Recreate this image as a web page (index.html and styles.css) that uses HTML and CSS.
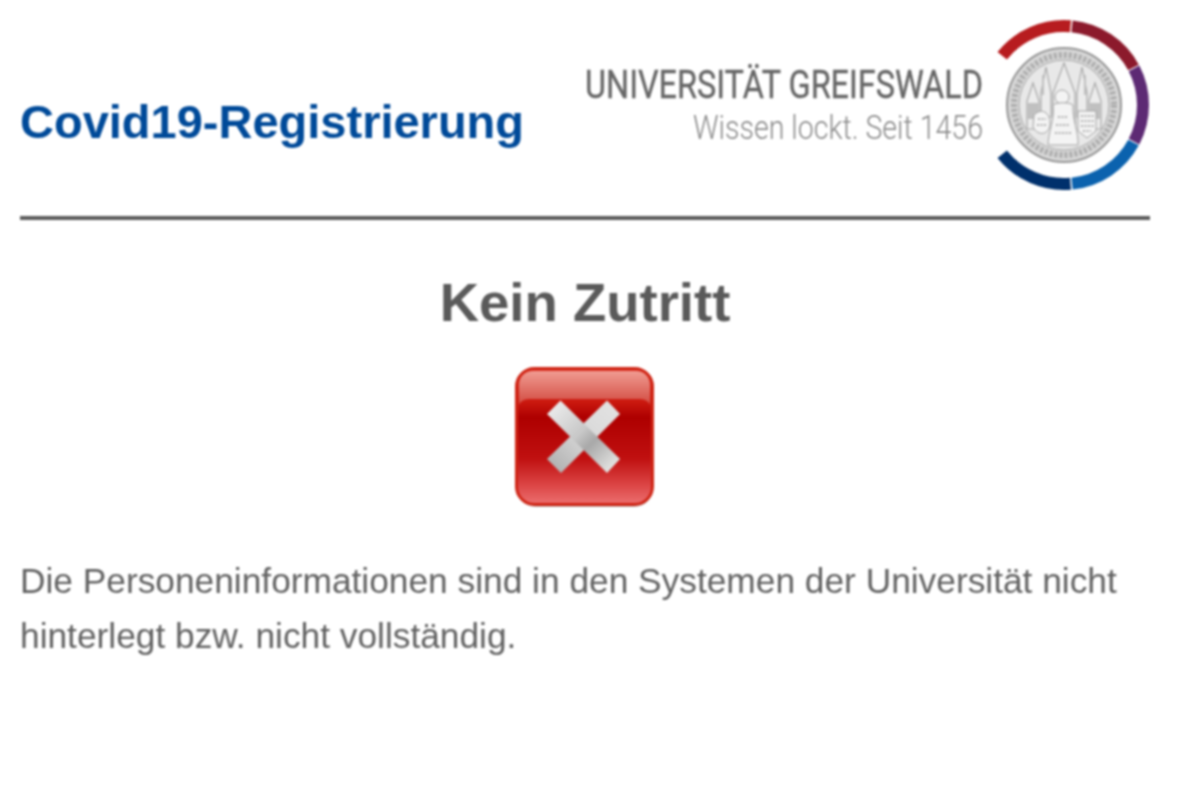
FILE: index.html
```html
<!DOCTYPE html>
<html lang="de">
<head>
<meta charset="utf-8">
<title>Covid19-Registrierung</title>
<link rel="stylesheet" href="styles.css">
</head>
<body>
<main class="page">
  <header class="header">
    <div class="title">Covid19-Registrierung</div>
    <svg class="logo" viewBox="0 0 570 180" width="570" height="180" role="img" aria-label="Universität Greifswald">
      <text class="logo-name" x="5" y="80" textLength="398" lengthAdjust="spacingAndGlyphs">UNIVERSITÄT GREIFSWALD</text>
      <text class="logo-claim" x="113" y="121" textLength="290" lengthAdjust="spacingAndGlyphs">Wissen lockt. Seit 1456</text>
      <g transform="translate(484 87)">
        <g class="ring">
          <path class="r1" d="M-61.8 -49.3A79 79 0 0 1 6.5 -78.7"/>
          <path class="r2" d="M8 -78.6A79 79 0 0 1 69.5 -37.5"/>
          <path class="r3" d="M70 -36.6A79 79 0 0 1 70 36.6"/>
          <path class="r4" d="M69.5 37.5A79 79 0 0 1 8 78.6"/>
          <path class="r5" d="M6.5 78.7A79 79 0 0 1 -61.8 49.3"/>
        </g>
        <g class="seal">
          <circle class="seal-base" r="57"/>
          <circle class="seal-text" r="50"/>
          <circle class="seal-line" r="45"/>
          <g class="seal-church">
            <path d="M0 -42L11 -12V22H-11V-12Z"/>
            <path d="M-31 -22L-25 -4V24H-37V-4Z"/>
            <path d="M31 -22L37 -4V24H25V-4Z"/>
            <path d="M-18 -38L-13 -12V12H-23V-12Z"/>
            <path d="M18 -38L23 -12V12H13V-12Z"/>
          </g>
          <g class="seal-shade">
            <path d="M-36 -2H-26V14H-36ZM26 -2H36V14H26ZM-22 -30H-20V-10H-22ZM20 -30H22V-10H20Z"/>
          </g>
          <g class="seal-figure">
            <circle cx="-2" cy="-8" r="7"/>
            <path d="M-11 0C-9 14 -16 28 -16 40H14C15 28 8 14 9 0C5 -3 -7 -3 -11 0Z"/>
            <path d="M-30 10C-22 2 -14 8 -14 18C-14 30 -26 32 -31 22Z"/>
            <path d="M14 6H32V26L23 33L14 26Z"/>
          </g>
          <g class="seal-dots">
            <path d="M17 11H30M17 16H30M17 21H30M19 26H27M-26 14H-18M-27 20H-18M-6 12H4M-8 20H6M-9 28H8"/>
          </g>
        </g>
      </g>
    </svg>
  </header>

  <h1 class="heading">Kein Zutritt</h1>

  <div class="status">
    <svg class="status-icon" viewBox="0 0 140 142" width="140" height="142" role="img" aria-label="Kein Zutritt">
      <defs>
        <linearGradient id="box" x1="0" y1="0" x2="0" y2="1">
          <stop offset="0" stop-color="#e23c30"/>
          <stop offset="0.24" stop-color="#cc1a10"/>
          <stop offset="0.36" stop-color="#ae0000"/>
          <stop offset="0.66" stop-color="#c01010"/>
          <stop offset="0.86" stop-color="#dc4646"/>
          <stop offset="1" stop-color="#ec7070"/>
        </linearGradient>
        <linearGradient id="gloss" x1="0" y1="0" x2="0" y2="1">
          <stop offset="0" stop-color="#f09c92"/>
          <stop offset="1" stop-color="#d24a40"/>
        </linearGradient>
        <linearGradient id="barA" x1="0" y1="0" x2="1" y2="1">
          <stop offset="0" stop-color="#f2f2f2"/>
          <stop offset="0.45" stop-color="#c8c8c8"/>
          <stop offset="0.6" stop-color="#a8a8a8"/>
          <stop offset="1" stop-color="#f4f4f2"/>
        </linearGradient>
        <linearGradient id="barB" x1="1" y1="0" x2="0" y2="1">
          <stop offset="0" stop-color="#e4e4e4"/>
          <stop offset="0.5" stop-color="#d8d8d8"/>
          <stop offset="1" stop-color="#aaaaaa"/>
        </linearGradient>
      </defs>
      <rect class="box-shadow" x="2" y="4" width="136" height="136" rx="19"/>
      <rect class="box-body" x="1.5" y="1.5" width="136" height="136" rx="18"/>
      <path class="box-gloss" d="M4 38V18C4 10 10 4 18 4H121C129 4 135 10 135 18V38C133 33 129 32 122 32H17C10 32 6 33 4 38Z"/>
      <path class="bar-b" d="M32 92L92 33.5L105 47L46 106Z"/>
      <path class="bar-a" d="M32 47L45.5 33.5L105 92L92 106Z"/>
    </svg>
  </div>

  <p class="message">Die Personeninformationen sind in den Systemen der Universität nicht hinterlegt bzw. nicht vollständig.</p>
</main>
</body>
</html>
```

FILE: styles.css
```css
html, body {
  margin: 0;
  padding: 0;
  background: #fff;
}

body {
  font-family: "Liberation Sans", Arial, sans-serif;
  color: #666;
}

.page {
  width: 1130px;
  margin-left: 20px;
  filter: blur(0.8px);
}

.header {
  display: flex;
  justify-content: space-between;
  align-items: center;
  padding: 18px 0 18px;
  border-bottom: 4px solid #5c5c5c;
}

.title {
  margin-top: 26px;
  font-size: 47px;
  font-weight: 700;
  color: #004a99;
}

.logo {
  display: block;
}

.logo-name {
  font-family: Roboto, sans-serif;
  font-size: 38px;
  fill: #666;
  stroke: #666;
  stroke-width: 0.35;
}

.logo-claim {
  font-family: Roboto, sans-serif;
  font-size: 33px;
  font-weight: 300;
  fill: #8a8a8a;
}

.ring path {
  fill: none;
  stroke-width: 12;
}
.r1 { stroke: #b71c1f; }
.r2 { stroke: #8c1a2c; }
.r3 { stroke: #5d2a74; }
.r4 { stroke: #0b62ae; }
.r5 { stroke: #00306c; }

.seal { filter: blur(0.5px); }
.seal-base { fill: #d8d8d8; stroke: #969696; stroke-width: 2; }
.seal-text { fill: none; stroke: #adadad; stroke-width: 6; stroke-dasharray: 3 2; }
.seal-line { fill: #e8e8e8; stroke: #a8a8a8; stroke-width: 1; }
.seal-church path { fill: #ececec; stroke: #a8a8a8; stroke-width: 1.2; }
.seal-shade path { fill: #c0c0c0; }
.seal-figure > * { fill: #f4f4f4; stroke: #a4a4a4; stroke-width: 1; }
.seal-dots path { fill: none; stroke: #989898; stroke-width: 1.6; stroke-dasharray: 2 1.5; }

.heading {
  margin: 51px 0 0;
  text-align: center;
  font-size: 54.5px;
  line-height: 64px;
  font-weight: 700;
  color: #5a5a5a;
}

.status {
  display: flex;
  justify-content: center;
  margin-top: 32px;
}

.status-icon {
  display: block;
}

.box-shadow { fill: #bbb; }
.box-body { fill: url(#box); stroke: #cf2414; stroke-width: 3; }
.box-gloss { fill: url(#gloss); }
.bar-a { fill: url(#barA); }
.bar-b { fill: url(#barB); }

.message {
  margin: 44px 0 0;
  font-size: 35.3px;
  line-height: 55px;
  color: #626262;
}
```
